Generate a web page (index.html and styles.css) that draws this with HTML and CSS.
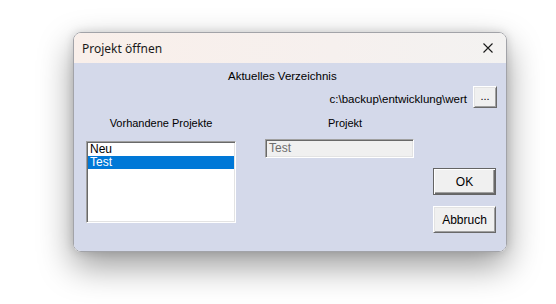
FILE: index.html
```html
<!DOCTYPE html>
<html lang="de">
<head>
  <meta charset="UTF-8" />
  <title>Projekt öffnen</title>
  <link rel="stylesheet" href="styles.css">
</head>
<body>

  <div class="dialog">
    <div class="titlebar">
      <span class="title">Projekt öffnen</span>
      <span class="close">
        <svg width="10" height="10" viewBox="0 0 10 10">
          <path d="M0.5 0.5 L9.5 9.5 M9.5 0.5 L0.5 9.5" stroke="#1a1a1a" stroke-width="1.1" fill="none"/>
        </svg>
      </span>
    </div>

    <div class="client">
      <div class="dir-label">Aktuelles Verzeichnis</div>
      <div class="dir-row">
        <span class="dir-path">c:\backup\entwicklung\wert</span>
        <button class="btn btn-small">...</button>
      </div>

      <div class="main-row">
        <div class="col col-list">
          <div class="col-label">Vorhandene Projekte</div>
          <ul class="listbox">
            <li>Neu</li>
            <li class="selected">Test</li>
          </ul>
        </div>

        <div class="col col-name">
          <div class="col-label name-label">Projekt</div>
          <div class="textbox">Test</div>
        </div>

        <div class="col col-buttons">
          <button class="btn btn-default">OK</button>
          <button class="btn">Abbruch</button>
        </div>
      </div>
    </div>
  </div>

</body>
</html>
```

FILE: styles.css
```css
html {
  background-color: #ffffff;
}

body {
  margin: 0;
  min-height: 304px;
  box-sizing: border-box;
  padding: 32px 0 0 73px;
  font-family: "Liberation Sans", Arial, sans-serif;
  font-size: 11px;
  color: #000000;
}

.dialog {
  width: 432px;
  height: 218px;
  border: 1px solid #a2a3a8;
  border-radius: 8px;
  box-shadow: 0 14px 34px rgba(0, 0, 0, 0.4), 0 0 10px rgba(0, 0, 0, 0.14);
  display: flex;
  flex-direction: column;
}

.titlebar {
  height: 30px;
  display: flex;
  align-items: center;
  justify-content: space-between;
  padding: 0 12px 0 8px;
  border-radius: 7px 7px 0 0;
  background: linear-gradient(to right, #f9efea, #f6f0ee 60%, #f3f2f1);
}

.title {
  font-family: "Noto Sans", "Open Sans", sans-serif;
  font-size: 12px;
  color: #1a1a1a;
}

.close {
  display: flex;
  margin-right: 1px;
}

.client {
  flex: 1;
  background-color: #d4d9ea;
  padding-top: 7px;
  border-radius: 0 0 7px 7px;
}

.dir-label {
  line-height: 13px;
  padding-left: 154px;
  font-size: 11.5px;
}

.dir-row {
  display: flex;
  justify-content: flex-end;
  align-items: center;
  gap: 6px;
  margin-top: 3px;
  padding-right: 9px;
}

.dir-path {
  padding-top: 3px;
  font-size: 11.5px;
}

.btn {
  font-family: "Liberation Sans", Arial, sans-serif;
  font-size: 12px;
  color: #000000;
  background-color: #f0f0f0;
  border: 1px solid;
  border-color: #ffffff #696969 #696969 #ffffff;
  box-shadow: inset 1px 1px #e3e3e3, inset -1px -1px #a0a0a0;
  padding: 0;
  width: 63px;
  height: 27px;
}

.btn-small {
  width: 24px;
  height: 22px;
  padding-bottom: 3px;
  font-size: 11px;
}

.btn-default {
  border-color: #646464;
  box-shadow: inset 1px 1px #ffffff, inset -1px -1px #696969, inset -2px -2px #a0a0a0;
}

.main-row {
  display: flex;
  padding-left: 12px;
  margin-top: 9px;
}

.col {
  display: flex;
  flex-direction: column;
}

.col-label {
  line-height: 13px;
  text-align: center;
  font-size: 11px;
}

.col-list {
  width: 150px;
}

.col-name {
  width: 149px;
  margin-left: 29px;
}

.name-label {
  padding-left: 11px;
}

.col-buttons {
  margin-left: 19px;
  padding-top: 51px;
  gap: 11px;
}

.listbox {
  list-style: none;
  margin: 11px 0 0 0;
  padding: 1px 0 0 0;
  height: 79px;
  background-color: #ffffff;
  border: 1px solid;
  border-color: #a0a0a0 #ffffff #ffffff #a0a0a0;
  box-shadow: inset 1px 1px #696969, inset -1px -1px #e3e3e3;
  font-size: 12px;
}

.listbox li {
  height: 13px;
  line-height: 13px;
  margin: 0 1px 0 1px;
  padding-left: 2px;
}

.listbox .selected {
  background-color: #0078d7;
  color: #ffffff;
}

.textbox {
  margin-top: 9px;
  height: 17px;
  line-height: 17px;
  padding-left: 3px;
  background-color: #f0f0f0;
  color: #6d6d6d;
  font-size: 12px;
  border: 1px solid;
  border-color: #a0a0a0 #ffffff #ffffff #a0a0a0;
  box-shadow: inset 1px 1px #696969, inset -1px -1px #e3e3e3;
}
```
